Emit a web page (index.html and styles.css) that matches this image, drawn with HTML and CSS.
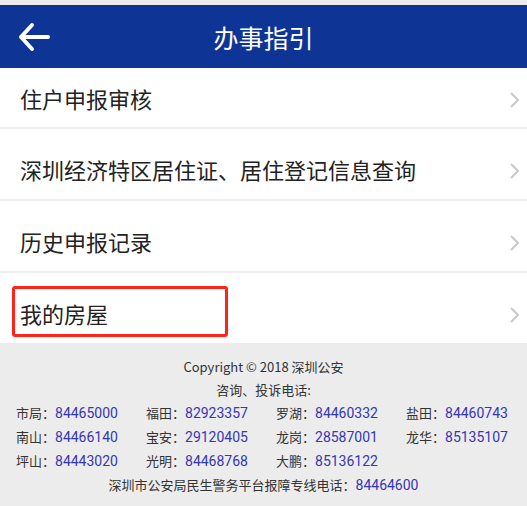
FILE: index.html
```html
<!DOCTYPE html>
<html lang="zh-CN">
<head>
  <meta charset="UTF-8" />
  <meta name="viewport" content="width=device-width, initial-scale=1.0"/>
  <title>办事指引</title>
  <link rel="stylesheet" href="styles.css">
</head>
<body>
  <div class="status-strip"></div>

  <header class="topbar">
    <a href="#" class="back" title="返回">
      <svg width="32" height="30" viewBox="0 0 32 30">
        <path d="M3 15 H30 M14 3 L3 15 L14 27" fill="none" stroke="#fff" stroke-width="4" stroke-linecap="round" stroke-linejoin="round"/>
      </svg>
    </a>
    <h1>办事指引</h1>
  </header>

  <ul class="menu">
    <li class="menu-item first">
      <span>住户申报审核</span>
      <svg class="chev" width="9" height="16" viewBox="0 0 9 16"><path d="M1 1 L8 8 L1 15" fill="none" stroke="#c9c9c9" stroke-width="2"/></svg>
    </li>
    <li class="menu-item">
      <span>深圳经济特区居住证、居住登记信息查询</span>
      <svg class="chev" width="9" height="16" viewBox="0 0 9 16"><path d="M1 1 L8 8 L1 15" fill="none" stroke="#c9c9c9" stroke-width="2"/></svg>
    </li>
    <li class="menu-item">
      <span>历史申报记录</span>
      <svg class="chev" width="9" height="16" viewBox="0 0 9 16"><path d="M1 1 L8 8 L1 15" fill="none" stroke="#c9c9c9" stroke-width="2"/></svg>
    </li>
    <li class="menu-item last">
      <span>我的房屋</span>
      <svg class="chev" width="9" height="16" viewBox="0 0 9 16"><path d="M1 1 L8 8 L1 15" fill="none" stroke="#c9c9c9" stroke-width="2"/></svg>
      <div class="highlight"></div>
    </li>
  </ul>

  <footer class="footer">
    <p>Copyright © 2018 深圳公安</p>
    <p>咨询、投诉电话:</p>
    <div class="phones">
      <span>市局：<em>84465000</em></span>
      <span>福田：<em>82923357</em></span>
      <span>罗湖：<em>84460332</em></span>
      <span>盐田：<em>84460743</em></span>
      <span>南山：<em>84466140</em></span>
      <span>宝安：<em>29120405</em></span>
      <span>龙岗：<em>28587001</em></span>
      <span>龙华：<em>85135107</em></span>
      <span>坪山：<em>84443020</em></span>
      <span>光明：<em>84468768</em></span>
      <span>大鹏：<em>85136122</em></span>
    </div>
    <p>深圳市公安局民生警务平台报障专线电话：<em>84464600</em></p>
  </footer>
</body>
</html>
```

FILE: styles.css
```css
* { margin: 0; padding: 0; box-sizing: border-box; }

body {
  font-family: "Noto Sans CJK SC", "Noto Sans", sans-serif;
  background: #ececec;
  color: #222;
  width: 527px;
  overflow: hidden;
}

.status-strip {
  height: 5px;
  background: #ececec;
}

.topbar {
  height: 63px;
  background: #0e3496;
  display: flex;
  align-items: center;
  justify-content: center;
  position: relative;
}

.topbar h1 {
  color: #fff;
  font-size: 25px;
  font-weight: 400;
}

.back {
  position: absolute;
  left: 18px;
  top: 17px;
  display: block;
  line-height: 0;
}

.menu {
  list-style: none;
  background: #fff;
}

.menu-item {
  height: 72px;
  padding: 10px 8px 0 20px;
  border-bottom: 2px solid #efefef;
  display: flex;
  align-items: center;
  justify-content: space-between;
  font-size: 22px;
  line-height: 30px;
  position: relative;
}

.menu-item .chev {
  margin-top: 4px;
}

.menu-item.first {
  height: 61px;
  padding-top: 1px;
}

.menu-item.last {
  height: 70px;
  border-bottom: none;
}

.highlight {
  position: absolute;
  left: 12px;
  top: 13px;
  width: 216px;
  height: 51px;
  border: 3px solid #ff2419;
  border-radius: 3px;
}

.footer {
  padding: 12px 0 14px;
  font-size: 13px;
  line-height: 23px;
  color: #333;
  text-align: center;
}

.footer em {
  font-style: normal;
  font-family: Roboto, "Noto Sans", sans-serif;
  color: #3636b4;
  font-size: 14px;
}

.phones {
  display: grid;
  grid-template-columns: repeat(4, 130px);
  padding-left: 16px;
  text-align: left;
}
```
